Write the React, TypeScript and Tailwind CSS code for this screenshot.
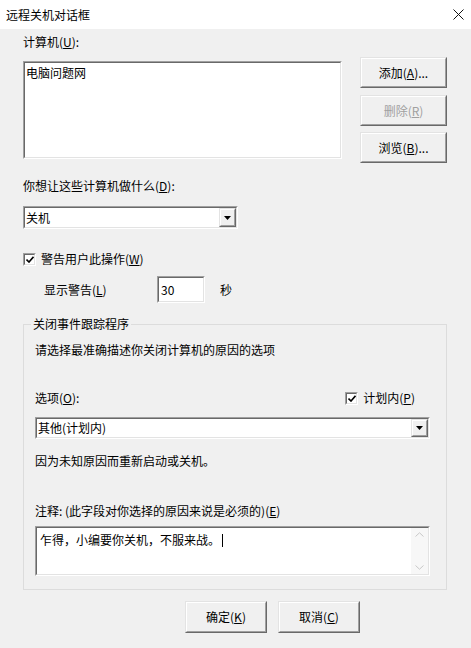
import React from "react"

function Sunken({ className = "", children }: { className?: string; children?: React.ReactNode }) {
  return (
    <div className={`border border-t-[#a0a0a0] border-l-[#a0a0a0] border-b-white border-r-white ${className}`}>
      <div className="h-full border border-t-[#696969] border-l-[#696969] border-b-[#e3e3e3] border-r-[#e3e3e3] bg-white">
        {children}
      </div>
    </div>
  )
}

function Raised({ className = "", children }: { className?: string; children?: React.ReactNode }) {
  return (
    <div className={`border border-t-[#e3e3e3] border-l-[#e3e3e3] border-b-[#696969] border-r-[#696969] ${className}`}>
      <div className="h-full border border-t-white border-l-white border-b-[#a0a0a0] border-r-[#a0a0a0] bg-[#f0f0f0] flex items-center justify-center">
        {children}
      </div>
    </div>
  )
}

function Combo({ value, className = "" }: { value: string; className?: string }) {
  return (
    <Sunken className={className}>
      <div className="flex h-full items-center">
        <span className="flex-1 pl-[1px]">{value}</span>
        <Raised className="h-full w-[17px]">
          <svg width="7" height="4" viewBox="0 0 7 4">
            <path d="M0 0H7L3.5 4Z" fill="#000" />
          </svg>
        </Raised>
      </div>
    </Sunken>
  )
}

function Check() {
  return (
    <div className="h-[13px] w-[13px] border border-t-[#a0a0a0] border-l-[#a0a0a0] border-b-white border-r-white">
      <div className="flex h-full items-center justify-center border border-t-[#696969] border-l-[#696969] border-b-[#e3e3e3] border-r-[#e3e3e3] bg-white">
        <svg width="8" height="7" viewBox="0 0 8 7">
          <path d="M0.5 3.5L3 6L7.5 0.8" stroke="#000" strokeWidth="1.6" fill="none" />
        </svg>
      </div>
    </div>
  )
}

export default function App() {
  return (
    <div className="h-[648px] w-[471px] overflow-hidden bg-[#f0f0f0] font-['Noto_Sans_CJK_SC',sans-serif] text-[12px] leading-[16px] text-black">
      {/* Title bar */}
      <div className="flex h-[29px] items-center justify-between bg-white pl-[6px] pr-[7px]">
        <span>远程关机对话框</span>
        <svg width="11" height="11" viewBox="0 0 11 11">
          <path d="M0.5 0.5L10.5 10.5M10.5 0.5L0.5 10.5" stroke="#111" strokeWidth="1" />
        </svg>
      </div>

      <div className="pl-[23px]">
        <div className="mt-[5px]">
          计算机(<span className="underline">U</span>):
        </div>

        <div className="mt-[7px] flex">
          <Sunken className="mt-[4px] h-[98px] w-[319px]">
            <div className="pl-[1px] pt-[2px]">电脑问题网</div>
          </Sunken>
          <div className="ml-[18px] flex w-[87px] flex-col">
            <Raised className="h-[31px]">
              <span>
                添加(<span className="underline">A</span>)...
              </span>
            </Raised>
            <Raised className="mt-[7px] h-[31px]">
              <span className="text-[#a0a0a0]">
                删除(<span className="underline">R</span>)
              </span>
            </Raised>
            <Raised className="mt-[6px] h-[31px]">
              <span>
                浏览(<span className="underline">B</span>)...
              </span>
            </Raised>
          </div>
        </div>

        <div className="mt-[15px]">
          你想让这些计算机做什么(<span className="underline">D</span>):
        </div>
        <Combo value="关机" className="mt-[12px] h-[23px] w-[215px]" />

        <div className="mt-[22px] flex items-center">
          <Check />
          <span className="ml-[5px]">
            警告用户此操作(<span className="underline">W</span>)
          </span>
        </div>

        <div className="mt-[9px] flex items-center pl-[21px]">
          <span className="w-[113px]">
            显示警告(<span className="underline">L</span>)
          </span>
          <Sunken className="h-[27px] w-[48px]">
            <div className="pl-[2px] pt-[4px]">30</div>
          </Sunken>
          <span className="ml-[15px]">秒</span>
        </div>

        {/* Shutdown Event Tracker group */}
        <div className="relative mt-[21px] w-[424px] border border-[#dcdcdc] pb-[13px] pl-[11px] pt-[17px]">
          <span className="absolute -top-[9px] left-[7px] bg-[#f0f0f0] px-[2px]">关闭事件跟踪程序</span>
          <div>请选择最准确描述你关闭计算机的原因的选项</div>

          <div className="mt-[32px] flex w-[395px] items-center justify-between pr-[15px]">
            <span>
              选项(<span className="underline">O</span>):
            </span>
            <div className="flex items-center">
              <Check />
              <span className="ml-[5px]">
                计划内(<span className="underline">P</span>)
              </span>
            </div>
          </div>
          <Combo value="其他(计划内)" className="mt-[11px] h-[22px] w-[395px]" />

          <div className="mt-[14px]">因为未知原因而重新启动或关机。</div>

          <div className="mt-[34px]">
            注释: (此字段对你选择的原因来说是必须的)(<span className="underline">E</span>)
          </div>
          <Sunken className="mt-[7px] h-[50px] w-[395px]">
            <div className="flex h-full">
              <div className="flex-1 pl-[3px] pt-[4px]">
                <span>乍得，小编要你关机，不服来战。</span>
                <span className="ml-[2px] inline-block h-[13px] w-[1px] translate-y-[2px] bg-black" />
              </div>
              <div className="flex w-[17px] flex-col items-center justify-between bg-[#f7f7f7] py-[4px]">
                <svg width="9" height="5" viewBox="0 0 9 5">
                  <path d="M0.5 4.5L4.5 0.8L8.5 4.5" stroke="#c8c8c8" fill="none" />
                </svg>
                <svg width="9" height="5" viewBox="0 0 9 5">
                  <path d="M0.5 0.5L4.5 4.2L8.5 0.5" stroke="#c8c8c8" fill="none" />
                </svg>
              </div>
            </div>
          </Sunken>
        </div>

        <div className="mt-[11px] flex gap-[11px] pl-[162px]">
          <Raised className="h-[32px] w-[82px]">
            <span>
              确定(<span className="underline">K</span>)
            </span>
          </Raised>
          <Raised className="h-[32px] w-[82px]">
            <span>
              取消(<span className="underline">C</span>)
            </span>
          </Raised>
        </div>
      </div>
    </div>
  )
}
